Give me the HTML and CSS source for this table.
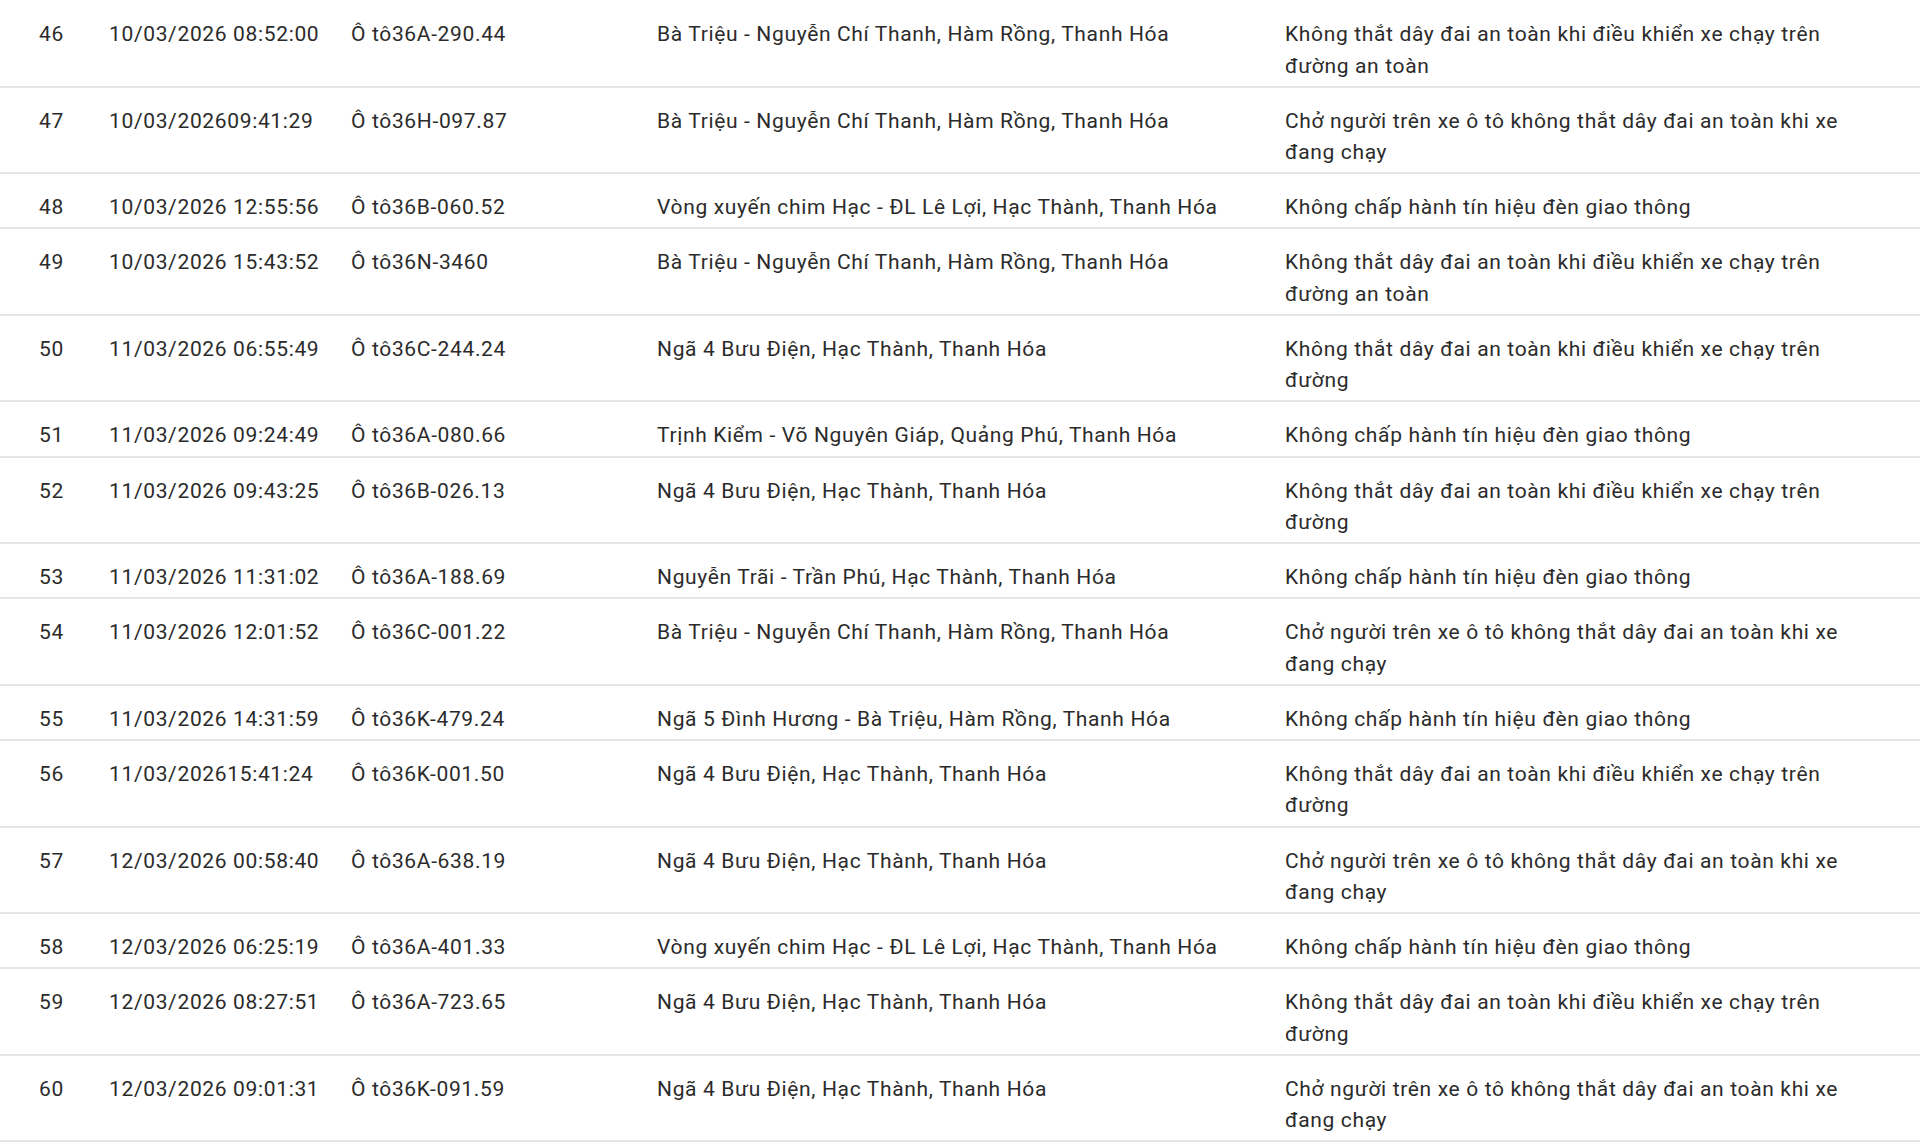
FILE: index.html
```html
<!DOCTYPE html>
<html lang="vi">
<head>
<meta charset="utf-8">
<title>Danh sách vi phạm</title>
<link rel="stylesheet" href="styles.css">
</head>
<body>
<div class="table">
  <div class="row"><div class="c-no">46</div><div class="c-time">10/03/2026 08:52:00</div><div class="c-plate">Ô tô36A-290.44</div><div class="c-place">Bà Triệu - Nguyễn Chí Thanh, Hàm Rồng, Thanh Hóa</div><div class="c-err">Không thắt dây đai an toàn khi điều khiển xe chạy trên đường an toàn</div></div>
  <div class="row"><div class="c-no">47</div><div class="c-time">10/03/202609:41:29</div><div class="c-plate">Ô tô36H-097.87</div><div class="c-place">Bà Triệu - Nguyễn Chí Thanh, Hàm Rồng, Thanh Hóa</div><div class="c-err">Chở người trên xe ô tô không thắt dây đai an toàn khi xe đang chạy</div></div>
  <div class="row"><div class="c-no">48</div><div class="c-time">10/03/2026 12:55:56</div><div class="c-plate">Ô tô36B-060.52</div><div class="c-place">Vòng xuyến chim Hạc - ĐL Lê Lợi, Hạc Thành, Thanh Hóa</div><div class="c-err">Không chấp hành tín hiệu đèn giao thông</div></div>
  <div class="row"><div class="c-no">49</div><div class="c-time">10/03/2026 15:43:52</div><div class="c-plate">Ô tô36N-3460</div><div class="c-place">Bà Triệu - Nguyễn Chí Thanh, Hàm Rồng, Thanh Hóa</div><div class="c-err">Không thắt dây đai an toàn khi điều khiển xe chạy trên đường an toàn</div></div>
  <div class="row"><div class="c-no">50</div><div class="c-time">11/03/2026 06:55:49</div><div class="c-plate">Ô tô36C-244.24</div><div class="c-place">Ngã 4 Bưu Điện, Hạc Thành, Thanh Hóa</div><div class="c-err">Không thắt dây đai an toàn khi điều khiển xe chạy trên đường</div></div>
  <div class="row"><div class="c-no">51</div><div class="c-time">11/03/2026 09:24:49</div><div class="c-plate">Ô tô36A-080.66</div><div class="c-place">Trịnh Kiểm - Võ Nguyên Giáp, Quảng Phú, Thanh Hóa</div><div class="c-err">Không chấp hành tín hiệu đèn giao thông</div></div>
  <div class="row"><div class="c-no">52</div><div class="c-time">11/03/2026 09:43:25</div><div class="c-plate">Ô tô36B-026.13</div><div class="c-place">Ngã 4 Bưu Điện, Hạc Thành, Thanh Hóa</div><div class="c-err">Không thắt dây đai an toàn khi điều khiển xe chạy trên đường</div></div>
  <div class="row"><div class="c-no">53</div><div class="c-time">11/03/2026 11:31:02</div><div class="c-plate">Ô tô36A-188.69</div><div class="c-place">Nguyễn Trãi - Trần Phú, Hạc Thành, Thanh Hóa</div><div class="c-err">Không chấp hành tín hiệu đèn giao thông</div></div>
  <div class="row"><div class="c-no">54</div><div class="c-time">11/03/2026 12:01:52</div><div class="c-plate">Ô tô36C-001.22</div><div class="c-place">Bà Triệu - Nguyễn Chí Thanh, Hàm Rồng, Thanh Hóa</div><div class="c-err">Chở người trên xe ô tô không thắt dây đai an toàn khi xe đang chạy</div></div>
  <div class="row"><div class="c-no">55</div><div class="c-time">11/03/2026 14:31:59</div><div class="c-plate">Ô tô36K-479.24</div><div class="c-place">Ngã 5 Đình Hương - Bà Triệu, Hàm Rồng, Thanh Hóa</div><div class="c-err">Không chấp hành tín hiệu đèn giao thông</div></div>
  <div class="row"><div class="c-no">56</div><div class="c-time">11/03/202615:41:24</div><div class="c-plate">Ô tô36K-001.50</div><div class="c-place">Ngã 4 Bưu Điện, Hạc Thành, Thanh Hóa</div><div class="c-err">Không thắt dây đai an toàn khi điều khiển xe chạy trên đường</div></div>
  <div class="row"><div class="c-no">57</div><div class="c-time">12/03/2026 00:58:40</div><div class="c-plate">Ô tô36A-638.19</div><div class="c-place">Ngã 4 Bưu Điện, Hạc Thành, Thanh Hóa</div><div class="c-err">Chở người trên xe ô tô không thắt dây đai an toàn khi xe đang chạy</div></div>
  <div class="row"><div class="c-no">58</div><div class="c-time">12/03/2026 06:25:19</div><div class="c-plate">Ô tô36A-401.33</div><div class="c-place">Vòng xuyến chim Hạc - ĐL Lê Lợi, Hạc Thành, Thanh Hóa</div><div class="c-err">Không chấp hành tín hiệu đèn giao thông</div></div>
  <div class="row"><div class="c-no">59</div><div class="c-time">12/03/2026 08:27:51</div><div class="c-plate">Ô tô36A-723.65</div><div class="c-place">Ngã 4 Bưu Điện, Hạc Thành, Thanh Hóa</div><div class="c-err">Không thắt dây đai an toàn khi điều khiển xe chạy trên đường</div></div>
  <div class="row"><div class="c-no">60</div><div class="c-time">12/03/2026 09:01:31</div><div class="c-plate">Ô tô36K-091.59</div><div class="c-place">Ngã 4 Bưu Điện, Hạc Thành, Thanh Hóa</div><div class="c-err">Chở người trên xe ô tô không thắt dây đai an toàn khi xe đang chạy</div></div>
</div>
</body>
</html>
```

FILE: styles.css
```css
html, body {
  margin: 0;
  padding: 0;
  background: #ffffff;
}

body {
  font-family: Roboto, "Noto Sans", "Liberation Sans", sans-serif;
  font-size: 21px;
  line-height: 31.5px;
  letter-spacing: 0.65px;
  color: #2b2b2b;
  overflow: hidden;
}

.table {
  display: flex;
  flex-direction: column;
  padding-top: 1px;
}

.row {
  display: grid;
  grid-template-columns: 70px 242px 306px 628px 575px;
  padding: 18px 0 3.6px 39px;
  border-bottom: 2px solid #e6e6e6;
}

.row > div {
  min-width: 0;
}

.c-err {
  padding-right: 8px;
}
```
